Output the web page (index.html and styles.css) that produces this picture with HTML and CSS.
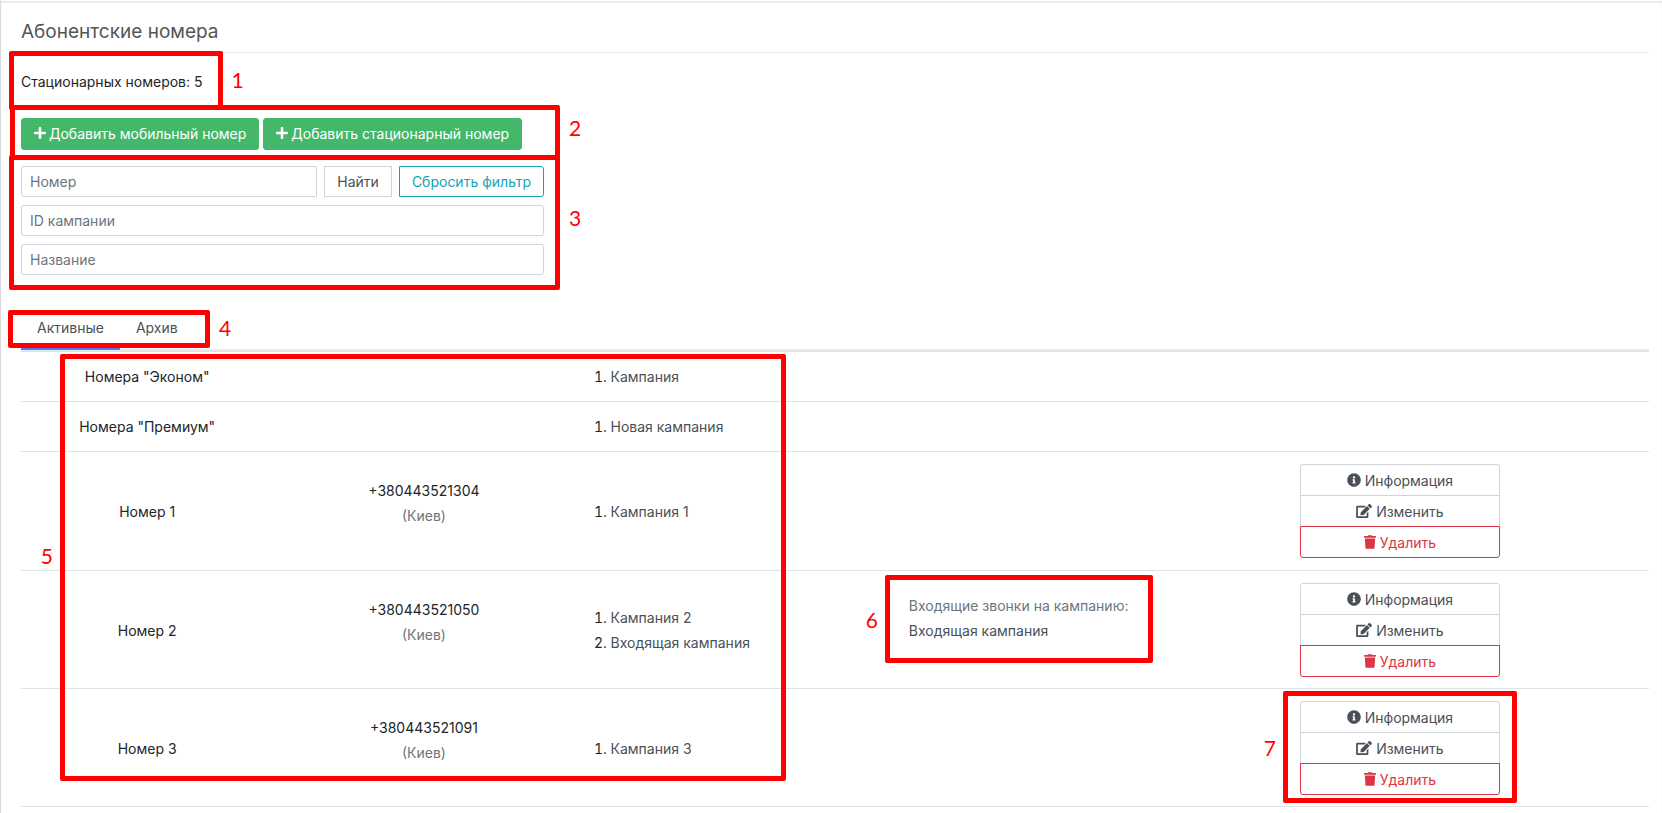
FILE: index.html
```
<!DOCTYPE html>
<html lang="ru">
<head>
  <meta charset="UTF-8" />
  <meta name="viewport" content="width=device-width, initial-scale=1" />
  <title>Абонентские номера</title>
  <link rel="stylesheet" href="styles.css">
</head>
<body>
  <svg class="sprite" aria-hidden="true">
    <symbol id="plus" viewBox="0 0 448 512"><path d="M416 208H272V64c0-17.67-14.33-32-32-32h-32c-17.67 0-32 14.33-32 32v144H32c-17.67 0-32 14.33-32 32v32c0 17.67 14.33 32 32 32h144v144c0 17.67 14.33 32 32 32h32c17.67 0 32-14.33 32-32V304h144c17.67 0 32-14.33 32-32v-32c0-17.67-14.33-32-32-32z"/></symbol>
    <symbol id="info" viewBox="0 0 512 512"><path d="M256 8C119.043 8 8 119.083 8 256c0 136.997 111.043 248 248 248s248-111.003 248-248C504 119.083 392.957 8 256 8zm0 110c23.196 0 42 18.804 42 42s-18.804 42-42 42-42-18.804-42-42 18.804-42 42-42zm56 254c0 6.627-5.373 12-12 12h-88c-6.627 0-12-5.373-12-12v-24c0-6.627 5.373-12 12-12h12v-64h-12c-6.627 0-12-5.373-12-12v-24c0-6.627 5.373-12 12-12h64c6.627 0 12 5.373 12 12v100h12c6.627 0 12 5.373 12 12v24z"/></symbol>
    <symbol id="edit" viewBox="0 0 576 512"><path d="M402.6 83.2l90.2 90.2c3.8 3.8 3.8 10 0 13.8L274.4 405.6l-92.8 10.3c-12.4 1.4-22.9-9.1-21.5-21.5l10.3-92.8L388.8 83.2c3.8-3.8 10-3.8 13.8 0zm162-22.9l-48.8-48.8c-15.2-15.2-39.9-15.2-55.2 0l-35.4 35.4c-3.8 3.8-3.8 10 0 13.8l90.2 90.2c3.8 3.8 10 3.8 13.8 0l35.4-35.4c15.2-15.3 15.2-40 0-55.2zM384 346.2V448H64V128h229.8c3.2 0 6.2-1.3 8.5-3.5l40-40c7.6-7.6 2.2-20.5-8.5-20.5H48C21.5 64 0 85.5 0 112v352c0 26.5 21.5 48 48 48h352c26.5 0 48-21.5 48-48V306.2c0-10.7-12.9-16-20.5-8.5l-40 40c-2.2 2.3-3.5 5.3-3.5 8.5z"/></symbol>
    <symbol id="trash" viewBox="0 0 448 512"><path d="M432 32H312l-9.4-18.7A24 24 0 0 0 281.1 0H166.8a23.72 23.72 0 0 0-21.4 13.3L136 32H16A16 16 0 0 0 0 48v32a16 16 0 0 0 16 16h416a16 16 0 0 0 16-16V48a16 16 0 0 0-16-16zM53.2 467a48 48 0 0 0 47.9 45h245.8a48 48 0 0 0 47.9-45L416 128H32z"/></symbol>
  </svg>

  <main class="card">
    <h1>Абонентские номера</h1>

    <div class="count">
      Стационарных номеров: 5
      <div class="mark mark-count"><span class="mark-num">1</span></div>
    </div>

    <div class="add-buttons">
      <button type="button" class="btn btn-success"><svg class="icon"><use href="#plus"/></svg>Добавить мобильный номер</button>
      <button type="button" class="btn btn-success"><svg class="icon"><use href="#plus"/></svg>Добавить стационарный номер</button>
      <div class="mark mark-add"><span class="mark-num">2</span></div>
    </div>

    <form class="filter">
      <div class="filter-row">
        <input type="text" class="field field-first" placeholder="Номер" aria-label="Номер" />
        <button type="submit" class="btn btn-find">Найти</button>
        <button type="reset" class="btn btn-reset">Сбросить фильтр</button>
      </div>
      <input type="text" class="field" placeholder="ID кампании" aria-label="ID кампании" />
      <input type="text" class="field" placeholder="Название" aria-label="Название" />
      <div class="mark mark-filter"><span class="mark-num">3</span></div>
    </form>

    <nav class="tabs">
      <a href="#active" class="tab active">Активные</a>
      <a href="#archive" class="tab">Архив</a>
      <div class="mark mark-tabs"><span class="mark-num">4</span></div>
    </nav>

    <div class="numbers-wrap" id="active">
      <table class="numbers">
        <colgroup>
          <col class="col-name"><col class="col-phone"><col class="col-campaign"><col class="col-incoming"><col>
        </colgroup>
        <tbody>
          <tr>
            <td class="center">Номера "Эконом"</td>
            <td></td>
            <td><ol><li><a href="#">Кампания</a></li></ol></td>
            <td></td>
            <td></td>
          </tr>
          <tr>
            <td class="center">Номера "Премиум"</td>
            <td></td>
            <td><ol><li><a href="#">Новая кампания</a></li></ol></td>
            <td></td>
            <td></td>
          </tr>
          <tr>
            <td class="center">Номер 1</td>
            <td class="center"><p>+380443521304<br><span class="muted">(Киев)</span></p></td>
            <td><ol><li><a href="#">Кампания 1</a></li></ol></td>
            <td></td>
            <td>
              <div class="actions">
                <button type="button" class="btn"><svg class="icon"><use href="#info"/></svg>Информация</button>
                <button type="button" class="btn"><svg class="icon icon-wide"><use href="#edit"/></svg>Изменить</button>
                <button type="button" class="btn btn-danger"><svg class="icon icon-narrow"><use href="#trash"/></svg>Удалить</button>
              </div>
            </td>
          </tr>
          <tr>
            <td class="center">Номер 2</td>
            <td class="center"><p>+380443521050<br><span class="muted">(Киев)</span></p></td>
            <td><ol><li><a href="#">Кампания 2</a></li><li><a href="#">Входящая кампания</a></li></ol></td>
            <td>
              <div class="incoming">
                <span class="muted">Входящие звонки на кампанию:</span><br><a href="#">Входящая кампания</a>
                <div class="mark mark-incoming"><span class="mark-num num-left">6</span></div>
              </div>
            </td>
            <td>
              <div class="actions">
                <button type="button" class="btn"><svg class="icon"><use href="#info"/></svg>Информация</button>
                <button type="button" class="btn"><svg class="icon icon-wide"><use href="#edit"/></svg>Изменить</button>
                <button type="button" class="btn btn-danger"><svg class="icon icon-narrow"><use href="#trash"/></svg>Удалить</button>
              </div>
            </td>
          </tr>
          <tr>
            <td class="center">Номер 3</td>
            <td class="center"><p>+380443521091<br><span class="muted">(Киев)</span></p></td>
            <td><ol><li><a href="#">Кампания 3</a></li></ol></td>
            <td></td>
            <td>
              <div class="actions">
                <button type="button" class="btn"><svg class="icon"><use href="#info"/></svg>Информация</button>
                <button type="button" class="btn"><svg class="icon icon-wide"><use href="#edit"/></svg>Изменить</button>
                <button type="button" class="btn btn-danger"><svg class="icon icon-narrow"><use href="#trash"/></svg>Удалить</button>
                <div class="mark mark-actions"><span class="mark-num num-left">7</span></div>
              </div>
            </td>
          </tr>
        </tbody>
      </table>
      <div class="mark mark-table"><span class="mark-num num-left">5</span></div>
    </div>
  </main>
</body>
</html>
```
FILE: styles.css
```
* {
  box-sizing: border-box;
}
body {
  margin: 0;
  font-family: Inter, sans-serif;
  font-size: 14px;
  line-height: 25px;
  color: #212529;
  background: #fff;
}
a {
  color: #495057;
  text-decoration: none;
}
p {
  margin: 0 0 16px;
}
.sprite {
  display: none;
}
.card {
  min-height: 100vh;
  padding: 17px 13px 0 20px;
  border-left: 1px solid #dcdcdc;
  box-shadow: inset 0 1px 0 #fff, inset 0 2px 0 #e4e6e6, inset 0 3px 2px #eee;
}
h1 {
  margin: 0 0 16px;
  padding-bottom: 5px;
  border-bottom: 1px solid #ebebeb;
  font-size: 19px;
  font-weight: 400;
  line-height: 30px;
  color: #555;
}
.count {
  position: relative;
  width: fit-content;
  margin-bottom: 24px;
}

/* buttons */
.btn {
  display: flex;
  align-items: center;
  justify-content: center;
  gap: 4px;
  height: 31px;
  padding: 0 12px;
  border: 1px solid #ced4da;
  background: #fff;
  color: #495057;
  font: inherit;
  cursor: pointer;
}
.icon {
  width: 14px;
  height: 14px;
  fill: currentColor;
}
.icon-wide {
  width: 16px;
}
.icon-narrow,
.btn-success .icon {
  width: 12px;
}
.add-buttons {
  position: relative;
  display: flex;
  gap: 4px;
  width: 523px;
  margin-bottom: 16px;
}
.btn-success {
  gap: 3px;
  height: 32px;
  padding-bottom: 2px;
  border-color: #43b76a;
  border-radius: 3px;
  background: #43b76a;
  color: #fff;
}
.btn-reset {
  border-color: #17a2b8;
  border-radius: 0 3px 3px 0;
  color: #17a2b8;
}

/* filter */
.filter {
  position: relative;
  display: flex;
  flex-direction: column;
  gap: 8px;
  width: 523px;
  margin-bottom: 35px;
}
.filter-row {
  display: flex;
  gap: 7px;
}
.field {
  height: 31px;
  padding: 0 8px;
  border: 1px solid #ced4da;
  border-radius: 3px;
  background: #fff;
  font: inherit;
  color: #495057;
}
.field::placeholder {
  color: #6c757d;
  opacity: 1;
}
.field-first {
  flex: 1;
  min-width: 0;
  border-radius: 3px 0 0 3px;
}

/* tabs */
.tabs {
  position: relative;
  display: flex;
  border-bottom: 2px solid #e9ecef;
}
.tab {
  margin-bottom: -1px;
  padding: 5px 16px 7px;
  border-bottom: 3px solid transparent;
}
.tab.active {
  border-color: #4680ff;
}

/* table */
.numbers-wrap {
  position: relative;
}
.numbers {
  width: 100%;
  table-layout: fixed;
  border-spacing: 0;
  border-bottom: 1px solid #dee2e6;
}
.numbers td {
  padding: 12px 12px 11px;
  border-top: 1px solid #dee2e6;
}
.numbers tr:nth-child(-n+3) td {
  padding-bottom: 12px;
}
.col-name {
  width: 15.5%;
}
.col-phone {
  width: 18.5%;
}
.col-campaign {
  width: 19.8%;
}
.col-incoming {
  width: 15.6%;
}
.center {
  text-align: center;
}
.numbers ol {
  margin: 0;
  padding-left: 24px;
}
.muted {
  color: #6c757d;
}
.incoming {
  position: relative;
  margin-bottom: 24px;
  white-space: nowrap;
}
.actions {
  position: relative;
  width: 200px;
  margin: 0 auto;
}
.actions .btn {
  width: 100%;
  height: 32px;
}
.actions .btn + .btn {
  margin-top: -1px;
}
.actions .btn:first-child {
  border-radius: 3px 3px 0 0;
}
.actions .btn-danger {
  position: relative;
  border-color: #dc3545;
  border-radius: 0 0 3px 3px;
  color: #dc3545;
}

/* red numbered frames over the page */
.mark {
  position: absolute;
  border: 5px solid #f00;
  border-radius: 2px;
  pointer-events: none;
}
.mark-num {
  position: absolute;
  top: 50%;
  left: 100%;
  margin: -14px 0 0 14px;
  font-family: Lato, sans-serif;
  font-size: 21px;
  color: #f00;
}
.mark-num.num-left {
  right: 100%;
  left: auto;
  margin: -12px 12px 0 0;
}
.mark-count {
  inset: -18px -20px -16px -12px;
}
.mark-add {
  inset: -13px -16px -10px -11px;
}
.mark-add .mark-num,
.mark-filter .mark-num {
  margin-top: -18px;
}
.mark-filter {
  inset: -11px -16px -15px -12px;
}
.mark-tabs {
  top: 0;
  bottom: 1px;
  left: -13px;
  width: 202px;
}
.mark-table {
  top: 3px;
  right: 53%;
  bottom: 26px;
  left: 39px;
}
.mark-table .mark-num {
  top: 47%;
}
.mark-incoming {
  inset: -18px -14px -20px -24px;
}
.mark-actions {
  inset: -10px -17px -8px;
}
```
